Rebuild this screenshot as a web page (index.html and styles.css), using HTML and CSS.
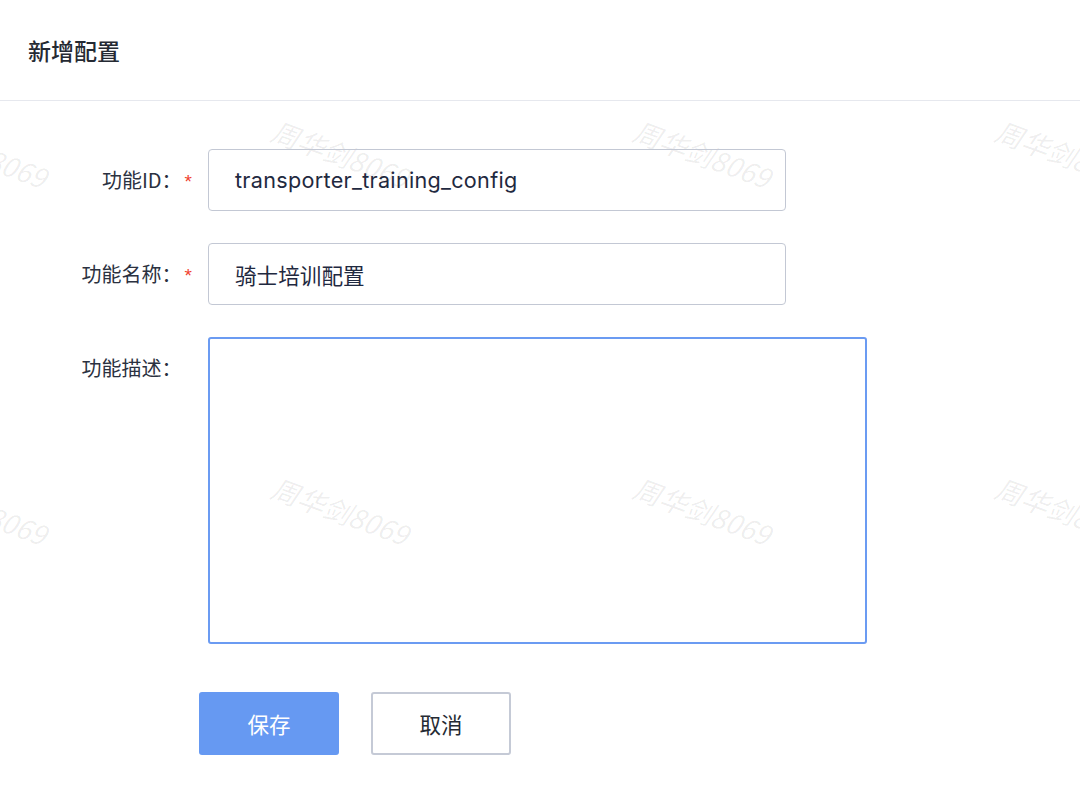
FILE: index.html
```html
<!DOCTYPE html>
<html lang="zh-CN">
<head>
<meta charset="utf-8">
<title>新增配置</title>
<link rel="stylesheet" href="styles.css">
</head>
<body>
<div class="page">
  <header class="header"><h1 class="title">新增配置</h1></header>
  <main class="form">
    <div class="row">
      <label class="label">功能ID：<span class="req">*</span></label>
      <div class="input"><span class="latin">transporter_training_config</span></div>
    </div>
    <div class="row">
      <label class="label">功能名称：<span class="req">*</span></label>
      <div class="input">骑士培训配置</div>
    </div>
    <div class="row">
      <label class="label">功能描述：<span class="req req-hidden">*</span></label>
      <div class="textarea"></div>
    </div>
    <div class="actions">
      <button class="btn btn-primary">保存</button>
      <button class="btn btn-default">取消</button>
    </div>
  </main>
  <div class="watermarks" aria-hidden="true">
    <span class="wm">周华剑8069</span><span class="wm">周华剑8069</span><span class="wm">周华剑8069</span><span class="wm">周华剑8069</span>
    <span class="wm">周华剑8069</span><span class="wm">周华剑8069</span><span class="wm">周华剑8069</span><span class="wm">周华剑8069</span>
  </div>
</div>
</body>
</html>
```
FILE: styles.css
```css
* { box-sizing: border-box; }
html, body { margin: 0; padding: 0; background: #fff; }
body {
  font-family: "Inter", "Noto Sans CJK SC", sans-serif;
  color: #1f2533;
  width: 1080px;
  height: 799px;
  overflow: hidden;
}
.page { position: relative; width: 1080px; height: 799px; overflow: hidden; }
.header {
  height: 101px;
  border-bottom: 1px solid #e6e8ee;
  display: flex;
  align-items: center;
  padding-left: 28px;
  background: #fff;
  position: relative;
  z-index: 2;
}
.title {
  margin: 0;
  font-family: "Noto Sans CJK SC", sans-serif;
  font-size: 23px;
  font-weight: 500;
  color: #252a33;
}
.form {
  padding-top: 48px;
  display: flex;
  flex-direction: column;
  gap: 32px;
  position: relative;
  z-index: 1;
}
.row { display: flex; align-items: flex-start; }
.label {
  width: 192px;
  height: 62px;
  flex: none;
  display: flex;
  align-items: center;
  justify-content: flex-end;
  font-family: "Noto Sans CJK SC", sans-serif;
  font-size: 20px;
  line-height: 1;
  color: #2b3140;
  margin-right: 16px;
  white-space: nowrap;
}
.req {
  color: #f0412f;
  font-family: "Liberation Sans", sans-serif;
  font-size: 19px;
  line-height: 1;
  margin-left: 3px;
  position: relative;
  top: 1px;
}
.req-hidden { visibility: hidden; }
.input {
  width: 578px;
  height: 62px;
  border: 1.5px solid #c3c8d4;
  border-radius: 4px;
  padding-left: 26px;
  display: flex;
  align-items: center;
  font-size: 21.6px;
  color: #1f2940;
  background: transparent;
}
.latin { letter-spacing: 0.3px; }
.textarea {
  width: 659px;
  height: 307px;
  border: 2px solid #6b9bf2;
  border-radius: 3px;
  background: transparent;
}
.actions {
  display: flex;
  gap: 32px;
  padding-left: 199px;
  margin-top: 16px;
}
.btn {
  width: 140px;
  height: 63px;
  border-radius: 3px;
  font-family: "Noto Sans CJK SC", sans-serif;
  font-size: 21.5px;
  cursor: pointer;
}
.btn-primary { background: #6699f2; border: none; color: #fff; }
.btn-default { background: #fff; border: 2px solid #c5cad6; color: #252a33; }
.watermarks {
  position: absolute;
  left: -94px;
  top: 110px;
  display: grid;
  grid-template-columns: repeat(4, 362px);
  grid-auto-rows: 357px;
  pointer-events: none;
  z-index: 0;
}
.wm {
  display: block;
  width: max-content;
  font-family: "Noto Sans CJK SC", sans-serif;
  font-style: italic;
  font-size: 27.5px;
  color: rgba(0, 0, 0, 0.07);
  transform: rotate(20deg);
  transform-origin: 0 0;
  margin-left: 12px;
}
```
